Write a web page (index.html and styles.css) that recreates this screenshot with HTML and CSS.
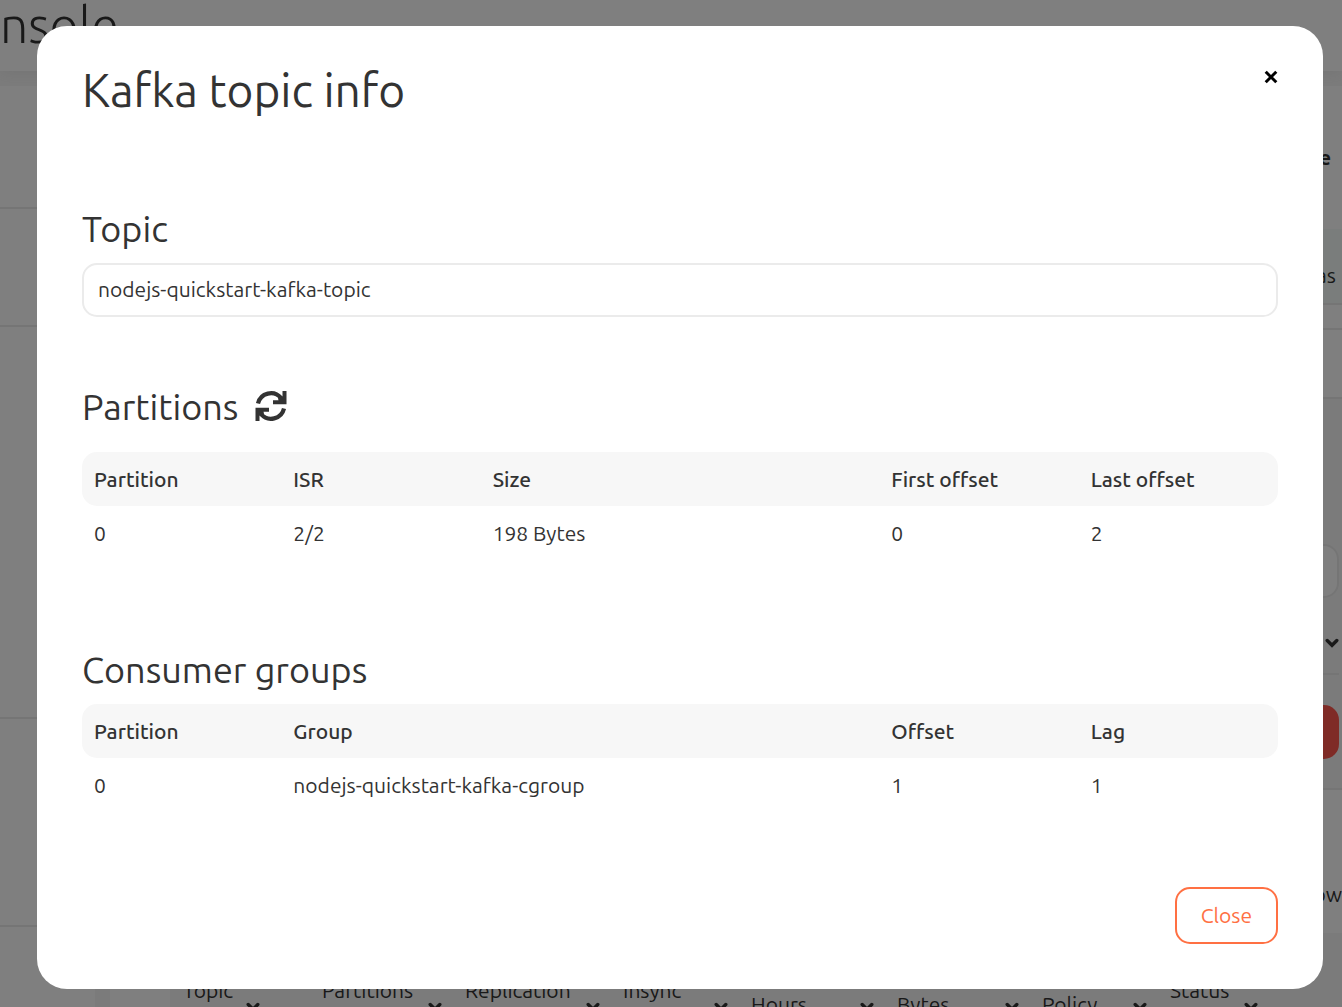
FILE: index.html
```html
<!DOCTYPE html>
<html lang="en">
<head>
<meta charset="utf-8">
<meta name="viewport" content="width=device-width, initial-scale=1">
<title>Kafka topic info</title>
<link rel="stylesheet" href="styles.css">
</head>
<body>
<svg class="sprite" aria-hidden="true">
  <symbol id="chevron" viewBox="0 0 14 10"><path d="M2.200 2.500 7 7.300 11.800 2.500" fill="none" stroke="currentColor" stroke-width="3.400" stroke-linecap="round"/></symbol>
</svg>
<div class="app">
  <header class="topbar"><span class="logo">nsole</span></header>
  <div class="body">
    <nav class="sidebar"><div></div><div></div><div></div><div></div><div></div></nav>
    <main class="main">
      <div class="row row-head"><b>e</b></div>
      <div class="row row-tint"><span>as</span></div>
      <div class="row row-thin"></div>
      <div class="row row-space"></div>
      <div class="filters">
        <input class="search" type="text" aria-label="Search">
        <div class="select-row"><svg class="chevron"><use href="#chevron"/></svg></div>
        <button class="danger" type="button" aria-label="Delete"></button>
      </div>
      <div class="row row-show"><span>ow</span></div>
      <div class="columns">
        <div>Topic<svg class="chevron"><use href="#chevron"/></svg></div>
        <div>Partitions<svg class="chevron"><use href="#chevron"/></svg></div>
        <div>Replication<svg class="chevron"><use href="#chevron"/></svg></div>
        <div>Insync<svg class="chevron"><use href="#chevron"/></svg></div>
        <div class="low">Hours<svg class="chevron"><use href="#chevron"/></svg></div>
        <div class="low">Bytes<svg class="chevron"><use href="#chevron"/></svg></div>
        <div class="low">Policy<svg class="chevron"><use href="#chevron"/></svg></div>
        <div>Status<svg class="chevron"><use href="#chevron"/></svg></div>
      </div>
    </main>
  </div>
</div>

<div class="overlay">
  <section class="modal" role="dialog" aria-modal="true" aria-labelledby="title">
    <header class="modal-head">
      <h1 id="title">Kafka topic info</h1>
      <button class="dismiss" type="button" aria-label="Dismiss">
        <svg viewBox="0 0 14 14"><path d="M1.700 1.700 12.300 12.300M12.300 1.700 1.700 12.300" stroke="currentColor" stroke-width="3"/></svg>
      </button>
    </header>

    <div class="topic">
      <h2><label for="topic">Topic</label></h2>
      <input id="topic" class="field" type="text" value="nodejs-quickstart-kafka-topic" readonly>
    </div>

    <div class="partitions">
      <h2>Partitions
        <button class="refresh" type="button" aria-label="Refresh">
          <svg viewBox="0 0 32 32"><path d="M3 13.500A13.200 13.200 0 0 1 26 8M29 18.500A13.200 13.200 0 0 1 6 24" fill="none" stroke="currentColor" stroke-width="4.200"/><path d="M27.500 1h4v13.200H18V10.200h5.500L23 8.500 26 5.500l1.500 1zM4.500 31h-4V17.800H14v4H8.500L9 23.500 6 26.500l-1.500-1z" fill="currentColor"/></svg>
        </button>
      </h2>
      <table>
        <colgroup><col><col><col class="wide-2"><col><col></colgroup>
        <thead><tr><th>Partition</th><th>ISR</th><th>Size</th><th>First offset</th><th>Last offset</th></tr></thead>
        <tbody><tr><td>0</td><td>2/2</td><td>198 Bytes</td><td>0</td><td>2</td></tr></tbody>
      </table>
    </div>

    <div class="groups">
      <h2>Consumer groups</h2>
      <table>
        <colgroup><col><col class="wide-3"><col><col></colgroup>
        <thead><tr><th>Partition</th><th>Group</th><th>Offset</th><th>Lag</th></tr></thead>
        <tbody><tr><td>0</td><td>nodejs-quickstart-kafka-cgroup</td><td>1</td><td>1</td></tr></tbody>
      </table>
    </div>

    <footer class="modal-foot"><button class="close" type="button">Close</button></footer>
  </section>
</div>
</body>
</html>
```
FILE: styles.css
```css
* { box-sizing: border-box; }

body {
  margin: 0;
  height: 100vh;
  overflow: hidden;
  background: #f7f7f7;
  color: #333;
  font: 21px/30px Ubuntu, "Noto Sans", sans-serif;
}

h1, h2 { margin: 0; font-weight: 400; }
button, input { font: inherit; color: inherit; }
button { padding: 0; border: 0; background: none; cursor: pointer; }
svg { display: block; }
.sprite { display: none; }

/* Page behind the dialog */
.topbar {
  height: 71px;
  margin-bottom: 15px;
  background: #fff;
  box-shadow: 0 2px 14px #e9e9e9;
}
.logo { display: block; font-size: 50px; line-height: 48px; font-weight: 300; }
.body { display: flex; gap: 15px; }
.sidebar { flex: 0 0 95px; background: #fff; }
.sidebar div { height: 118px; border-bottom: 2px solid #ebebeb; }
.sidebar div:first-child { height: 123px; }
.sidebar div:nth-child(3) { height: 392px; }
.sidebar div:nth-child(4) { height: 208px; }
.main { flex: 1; min-width: 0; background: #fff; }

.row { display: flex; align-items: center; justify-content: flex-end; border-bottom: 2px solid #ebebeb; }
.row-head { height: 143px; padding: 0 11px 2px 0; border: 0; }
.row-tint { height: 76px; padding: 18px 6px 0 0; background: #f4fbf8; }
.row-thin { height: 25px; }
.row-space { height: 69px; }
.filters {
  display: flex;
  flex-direction: column;
  align-items: flex-end;
  height: 391px;
  padding: 145px 3px 0 0;
  background: #f7f7f7;
  border-bottom: 2px solid #ebebeb;
}
.search { width: 160px; height: 54px; border: 2px solid #ebebeb; border-radius: 15px; background: #fff; }
.select-row { display: flex; justify-content: flex-end; align-items: center; width: 160px; height: 77px; padding-top: 15px; border-bottom: 2px solid #ebebeb; }
.chevron { flex: none; width: 14px; height: 10px; }
.danger { width: 160px; height: 54px; margin-top: 30px; border-radius: 15px; background: #ff564d; }
.row-show { height: 143px; padding-top: 64px; border: 0; }
.columns {
  display: grid;
  grid-template-columns: 139px 143px 158px 128px 146px 145px 128px 111px;
  height: 74px;
  margin-left: 60px;
  padding: 42px 0 0 13px;
  background: #f7f7f7;
}
.columns div { display: flex; justify-content: space-between; padding-right: 23px; }
.columns div:first-child { padding-right: 62px; }
.columns .low { padding-top: 14px; }
.columns .chevron { margin-top: 27px; }
.columns .low .chevron { margin-top: 13px; }

/* Dialog */
.overlay {
  position: fixed;
  inset: 0;
  padding: 26px 19px 18px 37px;
  overflow: auto;
  background: rgba(0, 0, 0, .5);
}
.modal { padding: 35px 45px 45px; border-radius: 30px; background: #fff; }
.modal-head { display: flex; justify-content: space-between; align-items: flex-start; }
h1 { font-size: 46px; line-height: 58px; }
h2 { display: flex; align-items: center; gap: 17px; font-size: 36px; line-height: 44px; }
.dismiss { height: 32px; color: #000; }
.dismiss svg { width: 14px; height: 14px; }
.refresh { padding-bottom: 2px; }
.refresh svg { width: 32px; height: 32px; }

.topic { margin-top: 88px; }
.field {
  display: block;
  width: 100%;
  height: 54px;
  margin-top: 12px;
  padding: 0 14px 2px;
  border: 2px solid #ebebeb;
  border-radius: 15px;
  background: #fff;
}
.partitions { margin-top: 68px; }
.partitions table { margin-top: 23px; }
.groups { margin-top: 88px; }
.groups table { margin-top: 12px; }

table { width: 100%; table-layout: fixed; border-collapse: separate; border-spacing: 0; }
.wide-2 { width: 33.333%; }
.wide-3 { width: 50%; }
th, td { padding: 12px; font-weight: 400; text-align: left; white-space: nowrap; }
th { background: #f7f7f7; font-weight: 500; }
th:first-child { border-radius: 15px 0 0 15px; }
th:last-child { border-radius: 0 15px 15px 0; }

.modal-foot { display: flex; justify-content: flex-end; margin-top: 75px; }
.close {
  height: 57px;
  padding: 0 24px 2px;
  border: 2px solid #ff7043;
  border-radius: 15px;
  color: #ff7043;
}
```
